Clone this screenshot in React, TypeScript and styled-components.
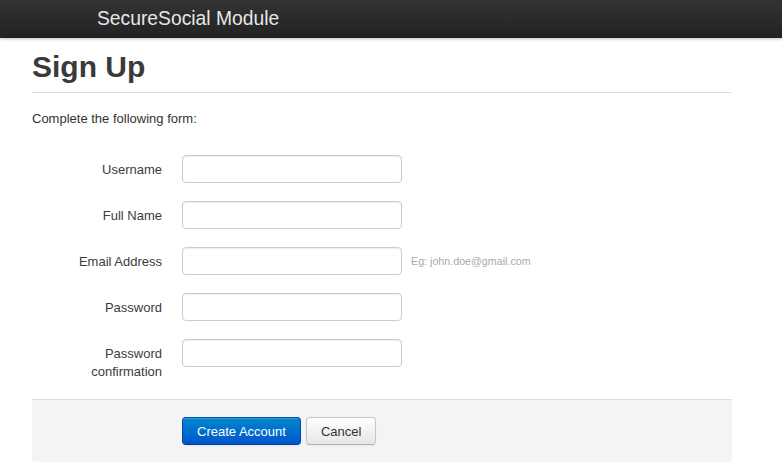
import React from 'react';
import styled, { createGlobalStyle } from 'styled-components';

const GlobalStyle = createGlobalStyle`
  html, body {
    margin: 0;
    padding: 0;
    background: #fff;
  }
  body {
    font-family: "Liberation Sans", Arial, Helvetica, sans-serif;
    font-size: 13px;
    line-height: 18px;
    color: #333;
  }
`;

const Navbar = styled.div`
  height: 38px;
  background: linear-gradient(to bottom, #333333, #222222);
  box-shadow: 0 1px 3px rgba(0, 0, 0, 0.25);
  display: flex;
  align-items: center;
`;

const Brand = styled.a`
  margin-left: 97px;
  font-size: 19.3px;
  line-height: 20px;
  color: #e6e6e6;
  text-decoration: none;
`;

const Container = styled.div`
  width: 700px;
  margin-left: 32px;
`;

const PageHeader = styled.div`
  margin-top: 9px;
  padding-bottom: 5px;
  border-bottom: 1px solid #ddd;
`;

const Title = styled.h1`
  margin: 0;
  font-size: 30px;
  line-height: 40px;
  font-weight: bold;
  color: #3a3a3a;
`;

const Intro = styled.p`
  margin: 17px 0 27px;
  font-size: 13px;
  color: #333;
`;

const Row = styled.div`
  display: flex;
  align-items: flex-start;
  margin-bottom: 18px;
`;

const Label = styled.label`
  width: 130px;
  padding-top: 6px;
  margin-right: 20px;
  text-align: right;
  font-size: 13px;
  line-height: 18px;
  color: #3c3c3c;
`;

const Input = styled.input`
  box-sizing: border-box;
  width: 220px;
  height: 28px;
  padding: 4px 6px;
  border: 1px solid #cccccc;
  border-radius: 4px;
  box-shadow: inset 0 1px 1px rgba(0, 0, 0, 0.075);
  font-family: inherit;
  font-size: 13px;
  background: #fff;
`;

const Hint = styled.span`
  margin-left: 9px;
  padding-top: 6px;
  font-size: 10.7px;
  line-height: 16px;
  color: #aaaaaa;
`;

const Actions = styled.div`
  display: flex;
  gap: 5px;
  margin-top: 1px;
  padding: 17px 20px 17px 150px;
  background: #f4f4f4;
  border-top: 1px solid #dddddd;
  border-radius: 0 0 4px 4px;
`;

const Button = styled.button<{ $primary?: boolean }>`
  height: 28px;
  padding: 0 14px;
  font-family: inherit;
  font-size: 13px;
  border-radius: 4px;
  cursor: pointer;
  color: ${p => (p.$primary ? '#fff' : '#333')};
  background: ${p =>
    p.$primary
      ? 'linear-gradient(to bottom, #0088cc, #0055cc)'
      : 'linear-gradient(to bottom, #ffffff, #e6e6e6)'};
  border: 1px solid ${p => (p.$primary ? '#0049a8' : '#c5c5c5')};
  border-bottom-color: ${p => (p.$primary ? '#003d8f' : '#b3b3b3')};
  box-shadow: inset 0 1px 0 rgba(255, 255, 255, 0.2), 0 1px 2px rgba(0, 0, 0, 0.05);
`;

const fields = [
  { label: 'Username', type: 'text' },
  { label: 'Full Name', type: 'text' },
  { label: 'Email Address', type: 'text', hint: 'Eg: john.doe@gmail.com' },
  { label: 'Password', type: 'password' },
  { label: 'Password confirmation', type: 'password' },
];

const App: React.FC = () => {
  return (
    <>
      <GlobalStyle />
      <Navbar>
        <Brand href="#">SecureSocial Module</Brand>
      </Navbar>
      <Container>
        <PageHeader>
          <Title>Sign Up</Title>
        </PageHeader>
        <Intro>Complete the following form:</Intro>
        <form>
          {fields.map(f => (
            <Row key={f.label}>
              <Label>{f.label}</Label>
              <Input type={f.type} />
              {f.hint && <Hint>{f.hint}</Hint>}
            </Row>
          ))}
          <Actions>
            <Button $primary type="submit">Create Account</Button>
            <Button type="button">Cancel</Button>
          </Actions>
        </form>
      </Container>
    </>
  );
};

export default App;
